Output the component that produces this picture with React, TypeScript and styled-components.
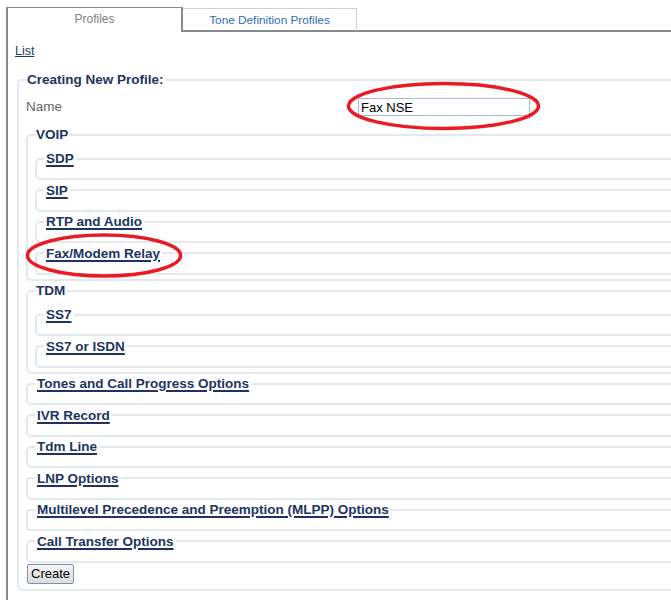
import React from "react";
import styled, { createGlobalStyle } from "styled-components";

const GlobalStyle = createGlobalStyle`
  html, body {
    margin: 0;
    padding: 0;
    background: #ffffff;
    overflow: hidden;
  }
  body {
    font-family: "Liberation Sans", Arial, sans-serif;
  }
`;

type Section = {
  title: string;
  children?: string[];
};

const sections: Section[] = [
  { title: "VOIP", children: ["SDP", "SIP", "RTP and Audio", "Fax/Modem Relay"] },
  { title: "TDM", children: ["SS7", "SS7 or ISDN"] },
  { title: "Tones and Call Progress Options" },
  { title: "IVR Record" },
  { title: "Tdm Line" },
  { title: "LNP Options" },
  { title: "Multilevel Precedence and Preemption (MLPP) Options" },
  { title: "Call Transfer Options" },
];

export default function App() {
  return (
    <>
      <GlobalStyle />
      <Page>
        <TabBar>
          <ActiveTab>Profiles</ActiveTab>
          <Tab>Tone Definition Profiles</Tab>
          <TabFiller />
        </TabBar>
        <Content>
          <ListLink href="#">List</ListLink>
          <OuterSet>
            <OuterLegend>Creating New Profile:</OuterLegend>
            <NameRow>
              <Label>Name</Label>
              <TextInput defaultValue="Fax NSE" />
            </NameRow>
            <Stack>
              {sections.map((s) =>
                s.children ? (
                  <GroupSet key={s.title}>
                    <GroupLegend>{s.title}</GroupLegend>
                    <Stack>
                      {s.children.map((c) => (
                        <ItemSet key={c}>
                          <LinkLegend>
                            <SectionLink href="#">{c}</SectionLink>
                          </LinkLegend>
                        </ItemSet>
                      ))}
                    </Stack>
                  </GroupSet>
                ) : (
                  <ItemSet key={s.title}>
                    <LinkLegend>
                      <SectionLink href="#">{s.title}</SectionLink>
                    </LinkLegend>
                  </ItemSet>
                )
              )}
            </Stack>
            <CreateButton>Create</CreateButton>
          </OuterSet>
        </Content>
        <Marks width="671" height="600" viewBox="0 0 671 600">
          <ellipse cx="443.5" cy="106" rx="95" ry="22.5" />
          <ellipse cx="104" cy="255.5" rx="76.5" ry="20.5" />
        </Marks>
      </Page>
    </>
  );
}

const Page = styled.div`
  position: relative;
  width: 900px;
  padding: 7px 0 0 6px;
`;

const TabBar = styled.div`
  display: flex;
  align-items: flex-end;
  height: 25px;
`;

const ActiveTab = styled.div`
  width: 173px;
  height: 24px;
  border-top: 1px solid #8a8a8a;
  border-left: 2px solid #8a8a8a;
  border-right: 2px solid #8a8a8a;
  color: #808080;
  font-size: 12px;
  line-height: 23px;
  text-align: center;
`;

const Tab = styled.div`
  width: 173px;
  height: 21px;
  border-top: 1px solid #d0d0d0;
  border-right: 1px solid #d0d0d0;
  border-bottom: 2px solid #8a8a8a;
  color: #2e6db4;
  font-size: 11.8px;
  line-height: 22px;
  text-align: center;
`;

const TabFiller = styled.div`
  flex: 1;
  border-bottom: 2px solid #8a8a8a;
`;

const Content = styled.div`
  border-left: 2px solid #8a8a8a;
  padding: 12px 0 20px 7px;
  display: flex;
  flex-direction: column;
  align-items: flex-start;
`;

const ListLink = styled.a`
  color: #1f3b6b;
  font-size: 12.5px;
  line-height: 15px;
  text-decoration: underline;
`;

const fieldsetBase = `
  margin: 0;
  border: 2px solid #e3e8ed;
  border-radius: 5px;
  min-width: 0;
`;

const OuterSet = styled.fieldset`
  ${fieldsetBase}
  align-self: stretch;
  margin: 12px 0 0 2px;
  padding: 0 0 5px 7px;
`;

const OuterLegend = styled.legend`
  padding: 0 1px;
  color: #1d3462;
  font-size: 13.5px;
  font-weight: bold;
  line-height: 17px;
`;

const NameRow = styled.div`
  display: grid;
  grid-template-columns: 332px 172px;
  align-items: center;
  margin: 8px 0 10px;
`;

const Label = styled.span`
  color: #666666;
  font-size: 13.5px;
`;

const TextInput = styled.input`
  box-sizing: border-box;
  width: 172px;
  height: 18px;
  margin-top: 2px;
  border: 1px solid #a9bccf;
  padding: 0 2px;
  font-family: "Liberation Sans", Arial, sans-serif;
  font-size: 13px;
  color: #000000;
`;

const Stack = styled.div`
  display: flex;
  flex-direction: column;
  gap: 1.5px;
`;

const GroupSet = styled.fieldset`
  ${fieldsetBase}
  padding: 7px 0 4px 7px;
`;

const GroupLegend = styled.legend`
  padding: 0 1px;
  color: #1d3462;
  font-size: 13.5px;
  font-weight: bold;
  line-height: 17px;
`;

const ItemSet = styled.fieldset`
  ${fieldsetBase}
  padding: 0 0 11px 7px;
`;

const LinkLegend = styled.legend`
  padding: 0 2px;
  font-size: 13.5px;
  font-weight: bold;
  line-height: 17px;
`;

const SectionLink = styled.a`
  color: #1d3462;
  text-decoration: underline;
  text-decoration-thickness: 2px;
  text-underline-offset: 2px;
`;

const CreateButton = styled.button`
  margin: 1px 0 0 1px;
  height: 20px;
  padding: 0 3px;
  border: 1px solid #7d93ad;
  border-radius: 2px;
  background: linear-gradient(#f4f4f4, #dcdcdc);
  font-family: "Liberation Sans", Arial, sans-serif;
  font-size: 13px;
  color: #000000;
`;

const Marks = styled.svg`
  position: absolute;
  left: 0;
  top: 0;
  pointer-events: none;

  ellipse {
    fill: none;
    stroke: #ea1a23;
    stroke-width: 3.5;
  }
`;
